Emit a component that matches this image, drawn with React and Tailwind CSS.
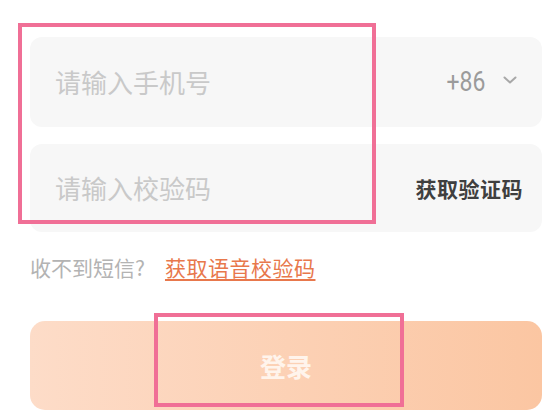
import React from "react";

export default function App() {
  const cjk = { fontFamily: '"Noto Sans CJK SC", "Noto Sans", sans-serif' };
  return (
    <div className="relative w-[553px] h-[417px] bg-white overflow-hidden" style={cjk}>
      <div className="flex flex-col pl-[30px] pr-[11px] pt-[37px] w-[553px]">
        <div className="flex items-center h-[90px] rounded-[12px] bg-[#f7f7f7] pl-[25px] pr-[25px]">
          <span className="flex-1 text-[26px] leading-none text-[#c9c9c9]">请输入手机号</span>
          <span
            className="inline-block text-[28px] leading-none text-[#9b9b9b] scale-x-[0.82] origin-right mr-[18px]"
            style={{ fontFamily: 'Roboto, "Liberation Sans", sans-serif' }}
          >
            +86
          </span>
          <svg width="14" height="8" viewBox="0 0 14 8" className="mt-[-4px]">
            <polyline points="1.5,1.5 7,6.5 12.5,1.5" fill="none" stroke="#a8a8a8" strokeWidth="2" strokeLinecap="round" strokeLinejoin="round" />
          </svg>
        </div>
        <div className="flex items-center h-[88px] mt-[17px] rounded-[12px] bg-[#f7f7f7] pl-[25px] pr-[19px]">
          <span className="flex-1 text-[26px] leading-none text-[#c9c9c9]">请输入校验码</span>
          <span className="text-[21px] leading-none font-bold text-[#3f3f3f] tracking-[0.5px]">获取验证码</span>
        </div>
        <div className="flex items-center h-[70px]">
          <span className="text-[21px] leading-none text-[#b3b3b3]">收不到短信?</span>
          <span className="ml-[20px] text-[21px] leading-none text-[#e8784c] tracking-[0.5px] underline underline-offset-[3px] decoration-[1.5px]">获取语音校验码</span>
        </div>
        <div className="mt-[19px] h-[89px] rounded-[15px] flex items-center justify-center bg-gradient-to-r from-[#fddcc8] to-[#fbc6a2]">
          <span className="text-[26px] font-bold leading-none text-[#fff4ec]">登录</span>
        </div>
      </div>
      <div className="absolute left-[18px] top-[23px] w-[358px] h-[201px] border-[4px] border-[#f06f96] pointer-events-none" />
      <div className="absolute left-[154px] top-[313px] w-[250px] h-[94px] border-[4px] border-[#f06f96] pointer-events-none" />
    </div>
  );
}
